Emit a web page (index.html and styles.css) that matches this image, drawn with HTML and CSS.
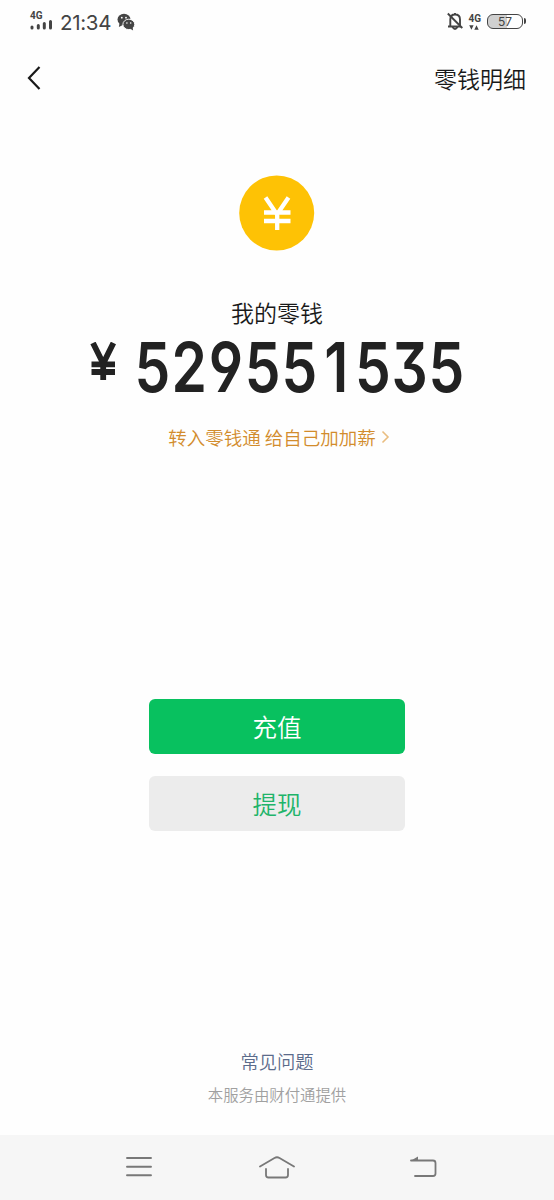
FILE: index.html
```html
<!DOCTYPE html>
<html lang="zh-CN">
<head>
<meta charset="utf-8">
<title>零钱</title>
<link rel="stylesheet" href="styles.css">
</head>
<body>
<div class="screen">
  <header class="status">
    <div class="signal">
      <span class="net">4G</span>
      <svg width="23" height="11" viewBox="0 0 23 11"><path d="M2 7v1M8.300 5.500v2.500M14.300 3.500v4.500M20.500 1.500v6.500" fill="none" stroke="#444" stroke-width="3" stroke-linecap="round"/></svg>
    </div>
    <span class="time">21:34</span>
    <svg class="wechat" width="18" height="18" viewBox="0 0 18 18">
      <ellipse cx="7" cy="6.500" rx="6.500" ry="5.800" fill="#444"/><path d="M2.500 10l-.6 4 4-2z" fill="#444"/>
      <circle cx="4.800" cy="4.700" r=".9" fill="#fff"/><circle cx="9" cy="4.700" r=".9" fill="#fff"/>
      <ellipse cx="11.800" cy="11.400" rx="5.900" ry="5.200" fill="#444" stroke="#fff" stroke-width=".9"/><path d="M13 15.500l3.100 1.900-.5-3.500z" fill="#444"/>
      <circle cx="9.900" cy="10" r=".8" fill="#fff"/><circle cx="13.700" cy="10" r=".8" fill="#fff"/>
    </svg>
    <div class="status-right">
      <svg width="18" height="19" viewBox="0 0 18 19" fill="none" stroke="#444" stroke-width="1.900"><path d="M1 14.500h13M3.300 14V7.500C3.300 4 5.500 2.500 8 2.500S13 4 13 7.500V14M8 2.500V1M5.500 15q2.500 4 5 0"/><path d="M.8 1.500l14.500 14.500"/></svg>
      <div class="data">
        <span class="net">4G</span>
        <svg width="10" height="5" viewBox="0 0 10 5"><path d="M.2.3h4.400L2.400 4.700zM5.300 4.700h4.400L7.500.3z" fill="#444"/></svg>
      </div>
      <div class="battery"><span>57</span></div>
    </div>
  </header>
  <nav class="topbar">
    <svg width="16" height="26" viewBox="0 0 16 26"><path d="M14.500 2L4 13l10.500 11" fill="none" stroke="#191919" stroke-width="2.200"/></svg>
    <span>零钱明细</span>
  </nav>
  <main class="wallet">
    <svg class="coin" width="76" height="76" viewBox="0 0 76 76">
      <circle cx="37.700" cy="38" r="37.500" fill="#fec205"/>
      <path d="M26.500 22.500L38 39.500 49.500 22.500M25 37.500h26.500M25 46h26.500M38.200 38v17" fill="none" stroke="#fff" stroke-width="4.300"/>
    </svg>
    <div class="label">我的零钱</div>
    <div class="amount">
      <svg class="yen" width="28" height="39" viewBox="0 0 28 39"><path d="M3 1L13.200 21.500 23.400 1M1.500 22.300h23.500M1.500 30h23.500M13.200 21v17" fill="none" stroke="#222" stroke-width="5.800"/></svg>
      <div class="number"><span>5</span><span>2</span><span>9</span><span>5</span><span>5</span><span>1</span><span>5</span><span>3</span><span>5</span></div>
    </div>
    <div class="promo"><span>转入零钱通 给自己加加薪</span><svg width="9" height="14" viewBox="0 0 9 14"><path d="M1.500 1.500L7 7 1.500 12.500" fill="none" stroke="#e9bd80" stroke-width="1.600"/></svg></div>
    <div class="button primary">充值</div>
    <div class="button secondary">提现</div>
    <div class="faq">常见问题</div>
    <div class="provider">本服务由财付通提供</div>
  </main>
  <footer class="navbar">
    <svg width="26" height="22" viewBox="0 0 26 22"><path d="M1 2h24M1 10.700h24M1 19.300h24" stroke="#787878" stroke-width="1.900" stroke-linecap="round"/></svg>
    <svg class="home" width="36" height="24" viewBox="0 0 36 24" fill="none" stroke="#787878" stroke-width="1.800" stroke-linecap="round"><path d="M1 10.500L15.500 2q2.500-1.500 5 0L35 10.500M7 13v6q0 2.500 2.500 2.500h17q2.500 0 2.500-2.500V13"/></svg>
    <svg width="27" height="22" viewBox="0 0 27 22"><path d="M1 4.500h22q2.500 0 2.500 2.500v10.500q0 2.500-2.500 2.500H5" fill="none" stroke="#787878" stroke-width="1.800" stroke-linecap="round"/><path d="M.3 5L8 .5V5z" fill="#787878"/></svg>
  </footer>
</div>
</body>
</html>
```
FILE: styles.css
```css
body {
  margin: 0;
  background: #fefefe;
  font-family: "Noto Sans CJK SC", sans-serif;
  font-weight: 350;
}

svg { display: block; flex: none; }

.screen {
  display: flex;
  flex-direction: column;
  width: 554px;
  height: 1200px;
  overflow: hidden;
}

.status {
  display: flex;
  height: 45px;
  padding: 0 30px;
  box-sizing: border-box;
  color: #444;
}

.signal { width: 30px; padding-top: 11px; }
.signal svg { margin-top: -1px; }

.net {
  display: block;
  font: bold 10px/10px Roboto, sans-serif;
}

.time {
  width: 57px;
  padding-top: 10px;
  font: 20.5px/25px Inter, sans-serif;
  letter-spacing: -.3px;
  white-space: nowrap;
}

.wechat { margin-top: 13px; }

.status-right {
  display: flex;
  margin-left: auto;
  margin-right: 1px;
  padding-top: 12px;
}

.data { padding: 2px 6px 0 3px; }
.data svg { margin: 1px 0 0 1px; }

.battery {
  position: relative;
  width: 36px;
  height: 15px;
  margin-top: 2px;
  box-sizing: border-box;
  border: 1.5px solid #444;
  border-radius: 6px;
  background: linear-gradient(90deg, #d0d0d0 57%, #fefefe 57%);
  text-align: center;
  font: 12px/13px Inter, sans-serif;
}

.battery::after {
  content: "";
  position: absolute;
  right: -4px;
  top: 3px;
  width: 2px;
  height: 6px;
  border-radius: 0 2px 2px 0;
  background: #444;
}

.topbar {
  display: flex;
  justify-content: space-between;
  align-items: center;
  height: 66px;
  padding: 0 28px 0 25px;
  color: #191919;
  font-size: 23px;
}

.wallet {
  display: flex;
  flex: 1;
  flex-direction: column;
  align-items: center;
}

.coin { margin-top: 64px; }
.label { margin-top: 45px; font-size: 23px; line-height: 32px; color: #191919; }

.amount {
  display: flex;
  width: 374px;
  height: 51px;
  margin-top: 14px;
}

.number {
  display: grid;
  grid-template-columns: repeat(9, 44.3px);
  margin-left: 15.500px;
  color: #222;
  font: 600 68.5px/52px Inter, sans-serif;
  font-feature-settings: "ss01", "cv09";
  text-align: center;
  transform: scaleX(.83);
  transform-origin: left;
}

.promo {
  display: flex;
  align-items: center;
  gap: 5px;
  margin-top: 30px;
  margin-left: 4px;
  color: #d28c2c;
  font-size: 18.5px;
  line-height: 28px;
}

.button {
  width: 256px;
  height: 55px;
  border-radius: 6px;
  text-align: center;
  font-size: 24.5px;
  line-height: 56px;
}

.primary { margin-top: 248px; background: #08c15f; color: #fff; }
.secondary { margin-top: 22px; background: #ececec; color: #20b469; }

.faq { margin-top: 216px; color: #5b6b8b; font-size: 18.3px; line-height: 28px; }
.provider { margin-top: 7px; color: #a0a0a0; font-size: 15.4px; line-height: 24px; }

.navbar {
  display: flex;
  justify-content: space-between;
  height: 65px;
  box-sizing: border-box;
  padding: 21px 117px 0 126px;
  background: #f6f6f6;
}

.home { margin-right: 8px; }
```
